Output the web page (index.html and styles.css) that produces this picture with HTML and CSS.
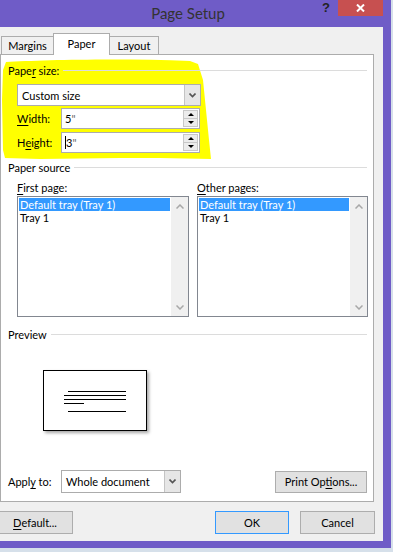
FILE: index.html
```html
<!DOCTYPE html>
<html lang="en">
<head>
  <meta charset="UTF-8">
  <meta name="viewport" content="width=device-width, initial-scale=1.0">
  <title>Page Setup</title>
  <link rel="stylesheet" href="styles.css">
</head>
<body>
  <div class="window">
    <!-- Title bar -->
    <div class="titlebar">
      <span class="title">Page Setup</span>
      <span class="help">?</span>
      <span class="close">
        <svg width="9" height="8" viewBox="0 0 9 8"><path d="M1 0.5 L8 7.5 M8 0.5 L1 7.5" stroke="#fff" stroke-width="2"/></svg>
      </span>
    </div>

    <div class="dialog">
      <!-- Tabs -->
      <div class="tabs">
        <div class="tab tab-first">Margins</div>
        <div class="tab active">Paper</div>
        <div class="tab tab-last">Layout</div>
      </div>

      <div class="panel">
        <!-- highlighter scribble behind the paper size group -->
        <svg class="marker" width="215" height="215" viewBox="0 0 215 215">
          <path d="M6 62 C40 60 120 58 190 61 L198 64 L203 80 L206 110 L209 140 L211 159 L160 158 L120 158 L40 159 L5 158 L3 150 L2 100 L3 70 Z" fill="#ffff00"/>
        </svg>

        <div class="group-head"><span>Pape<u>r</u> size:</span></div>
        <div class="section">
          <div class="combo combo-size">
            <span class="combo-text">Custom size</span>
            <span class="combo-btn"><svg width="7" height="5" viewBox="0 0 7 5"><path d="M0.5 0.5 L3.5 3.5 L6.5 0.5" fill="none" stroke="#555" stroke-width="1.6"/></svg></span>
          </div>
          <div class="field">
            <span class="field-label"><u>W</u>idth:</span>
            <div class="spin">
              <span class="spin-text">5<span class="unit">"</span></span>
              <span class="spin-btns">
                <span class="spin-up"><svg width="6" height="3" viewBox="0 0 6 3"><path d="M0 3 L3 0 L6 3 Z" fill="#000"/></svg></span>
                <span class="spin-down"><svg width="6" height="3" viewBox="0 0 6 3"><path d="M0 0 L3 3 L6 0 Z" fill="#000"/></svg></span>
              </span>
            </div>
          </div>
          <div class="field field-height">
            <span class="field-label">H<u>e</u>ight:</span>
            <div class="spin">
              <span class="spin-text"><span class="caret"></span>3<span class="unit">"</span></span>
              <span class="spin-btns">
                <span class="spin-up"><svg width="6" height="3" viewBox="0 0 6 3"><path d="M0 3 L3 0 L6 3 Z" fill="#000"/></svg></span>
                <span class="spin-down"><svg width="6" height="3" viewBox="0 0 6 3"><path d="M0 0 L3 3 L6 0 Z" fill="#000"/></svg></span>
              </span>
            </div>
          </div>
        </div>

        <div class="group-head head-source"><span>Paper source</span></div>
        <div class="sources">
          <div class="source">
            <span class="list-label"><u>F</u>irst page:</span>
            <div class="list">
              <ul class="list-items">
                <li class="selected">Default tray (Tray 1)</li>
                <li>Tray 1</li>
              </ul>
              <div class="scrollbar">
                <svg width="8" height="5" viewBox="0 0 8 5"><path d="M0.5 4.5 L4 1 L7.5 4.5" fill="none" stroke="#a8a8a8" stroke-width="1.5"/></svg>
                <svg width="8" height="5" viewBox="0 0 8 5"><path d="M0.5 0.5 L4 4 L7.5 0.5" fill="none" stroke="#a8a8a8" stroke-width="1.5"/></svg>
              </div>
            </div>
          </div>
          <div class="source">
            <span class="list-label"><u>O</u>ther pages:</span>
            <div class="list">
              <ul class="list-items">
                <li class="selected">Default tray (Tray 1)</li>
                <li>Tray 1</li>
              </ul>
              <div class="scrollbar">
                <svg width="8" height="5" viewBox="0 0 8 5"><path d="M0.5 4.5 L4 1 L7.5 4.5" fill="none" stroke="#a8a8a8" stroke-width="1.5"/></svg>
                <svg width="8" height="5" viewBox="0 0 8 5"><path d="M0.5 0.5 L4 4 L7.5 0.5" fill="none" stroke="#a8a8a8" stroke-width="1.5"/></svg>
              </div>
            </div>
          </div>
        </div>

        <div class="group-head head-preview"><span>Preview</span></div>
        <div class="preview-page">
          <svg width="102" height="59" viewBox="0 0 102 59">
            <g stroke="#000" stroke-width="1">
              <path d="M24 20.5 H82"/>
              <path d="M20 24.5 H82"/>
              <path d="M20 28.5 H82"/>
              <path d="M20 32.5 H40"/>
              <path d="M24 40.5 H82"/>
            </g>
          </svg>
        </div>

        <div class="apply-row">
          <span class="apply-label">Appl<u>y</u> to:</span>
          <div class="combo combo-apply">
            <span class="combo-text">Whole document</span>
            <span class="combo-btn"><svg width="7" height="5" viewBox="0 0 7 5"><path d="M0.5 0.5 L3.5 3.5 L6.5 0.5" fill="none" stroke="#555" stroke-width="1.6"/></svg></span>
          </div>
          <button class="btn btn-print">Print Op<u>t</u>ions...</button>
        </div>
      </div>

      <!-- Bottom buttons -->
      <div class="footer">
        <button class="btn btn-default"><u>D</u>efault...</button>
        <button class="btn btn-ok">OK</button>
        <button class="btn btn-cancel">Cancel</button>
      </div>
    </div>
  </div>
</body>
</html>
```

FILE: styles.css
```css
body {
  margin: 0;
  background: #d6e0ea;
  font-family: Lato, "Noto Sans", sans-serif;
  font-size: 11px;
  line-height: 13px;
  color: #000;
}
u {
  text-decoration-thickness: 1px;
  text-underline-offset: 2px;
}
.window {
  width: 391px;
  height: 548px;
  background: #6f5cc7;
  display: flex;
  flex-direction: column;
}

/* title bar */
.titlebar {
  height: 27px;
  display: flex;
  align-items: flex-start;
}
.titlebar .title {
  flex: 1;
  text-align: center;
  padding: 4px 0 0 54px;
  font-size: 15px;
  line-height: 18px;
  color: #333;
}
.titlebar .help {
  margin-right: 8px;
  font-family: "Liberation Sans", sans-serif;
  font-weight: bold;
  font-size: 13px;
  line-height: 15px;
  color: #222;
}
.titlebar .close {
  width: 45px;
  height: 16px;
  margin-right: 8px;
  background: #c75050;
  display: flex;
  align-items: center;
  justify-content: center;
}

.dialog {
  flex: 1;
  margin: 0 8px 7px 0;
  padding-top: 6px;
  background: #f0f0f0;
  display: flex;
  flex-direction: column;
}

/* tabs */
.tabs {
  height: 21px;
  padding-left: 1px;
  display: flex;
  align-items: flex-end;
}
.tab {
  height: 18px;
  box-sizing: border-box;
  border-top: 1px solid #acacac;
  background: #f0f0f0;
  text-align: center;
  line-height: 17px;
}
.tab-first {
  width: 52px;
  border-left: 1px solid #acacac;
}
.tab-last {
  width: 49px;
  border-right: 1px solid #acacac;
}
.tab.active {
  width: 57px;
  height: 22px;
  margin-bottom: -1px;
  border: 1px solid #acacac;
  border-bottom: none;
  background: #fff;
  line-height: 20px;
  position: relative;
  z-index: 1;
}

/* tab page */
.panel {
  margin-right: 9px;
  padding: 9px 6px 8px 7px;
  border: 1px solid #acacac;
  background: #fff;
  position: relative;
  z-index: 0;
}
.marker {
  position: absolute;
  left: -1px;
  top: -55px;
  z-index: -1;
}
.group-head {
  height: 13px;
  display: flex;
  align-items: center;
}
.group-head::after {
  content: "";
  flex: 1;
  margin-left: 4px;
  border-top: 1px solid #dcdcdc;
}
.head-source {
  margin-top: 8px;
}
.head-preview {
  margin-top: 11px;
}
.section {
  padding-left: 9px;
}

/* combo boxes and spinners */
.combo {
  box-sizing: border-box;
  border: 1px solid #acacac;
  background: #fff;
  display: flex;
}
.combo-text {
  flex: 1;
  padding-left: 4px;
  display: flex;
  align-items: center;
}
.combo-btn {
  width: 15px;
  border-left: 1px solid #c4c4c4;
  background: #e6e6e6;
  display: flex;
  align-items: center;
  justify-content: center;
}
.combo-size {
  width: 184px;
  height: 22px;
  margin-top: 7px;
}
.field {
  height: 21px;
  margin-top: 2px;
  display: flex;
}
.field-height {
  margin-top: 3px;
}
.field-label {
  width: 44px;
  display: flex;
  align-items: center;
}
.spin {
  width: 139px;
  box-sizing: border-box;
  border: 1px solid #acacac;
  background: #fff;
  display: flex;
}
.spin-text {
  flex: 1;
  padding-left: 3px;
  display: flex;
  align-items: center;
}
.unit {
  color: #666;
}
.caret {
  width: 1px;
  height: 13px;
  background: #000;
}
.spin-btns {
  width: 15px;
  margin: 1px 1px 1px 0;
  display: flex;
  flex-direction: column;
}
.spin-btns span {
  flex: 1;
  box-sizing: border-box;
  border: 1px solid #c8c8c8;
  background: #ececec;
  display: flex;
  align-items: center;
  justify-content: center;
}
.spin-btns .spin-down {
  border-top: none;
}

/* paper source lists */
.sources {
  display: grid;
  grid-template-columns: 172px 171px;
  column-gap: 8px;
  padding-left: 9px;
}
.list-label {
  display: block;
  margin-top: 7px;
}
.list {
  height: 121px;
  margin-top: 2px;
  box-sizing: border-box;
  border: 1px solid #828790;
  background: #fff;
  display: flex;
}
.list-items {
  flex: 1;
  margin: 0;
  padding: 1px;
  list-style: none;
}
.list-items li {
  height: 13px;
  padding-left: 1px;
  line-height: 13px;
}
.list-items li.selected {
  background: #3399ff;
  color: #fff;
}
.scrollbar {
  width: 17px;
  padding: 7px 0 6px;
  background: #f0f0f0;
  display: flex;
  flex-direction: column;
  justify-content: space-between;
  align-items: center;
}

/* preview */
.preview-page {
  width: 104px;
  height: 61px;
  margin: 29px 0 0 35px;
  box-sizing: border-box;
  border: 1px solid #000;
  background: #fff;
  box-shadow: 2px 2px 3px rgba(0, 0, 0, 0.35);
}
.preview-page svg {
  display: block;
}

.apply-row {
  height: 23px;
  margin-top: 39px;
  display: flex;
  align-items: center;
}
.apply-label {
  width: 53px;
}
.combo-apply {
  width: 120px;
  height: 23px;
}

/* buttons */
.btn {
  box-sizing: border-box;
  height: 23px;
  padding: 0;
  border: 1px solid #adadad;
  background: #e1e1e1;
  font-family: inherit;
  font-size: 11px;
  color: #000;
}
.btn-print {
  width: 92px;
  height: 22px;
  margin-left: auto;
}
.footer {
  padding: 9px 8px 7px 0;
  display: flex;
  gap: 11px;
}
.btn-default {
  width: 76px;
  margin-left: -3px;
  margin-right: auto;
}
.btn-ok {
  width: 74px;
  border-color: #3399ff;
}
.btn-cancel {
  width: 75px;
}
```
